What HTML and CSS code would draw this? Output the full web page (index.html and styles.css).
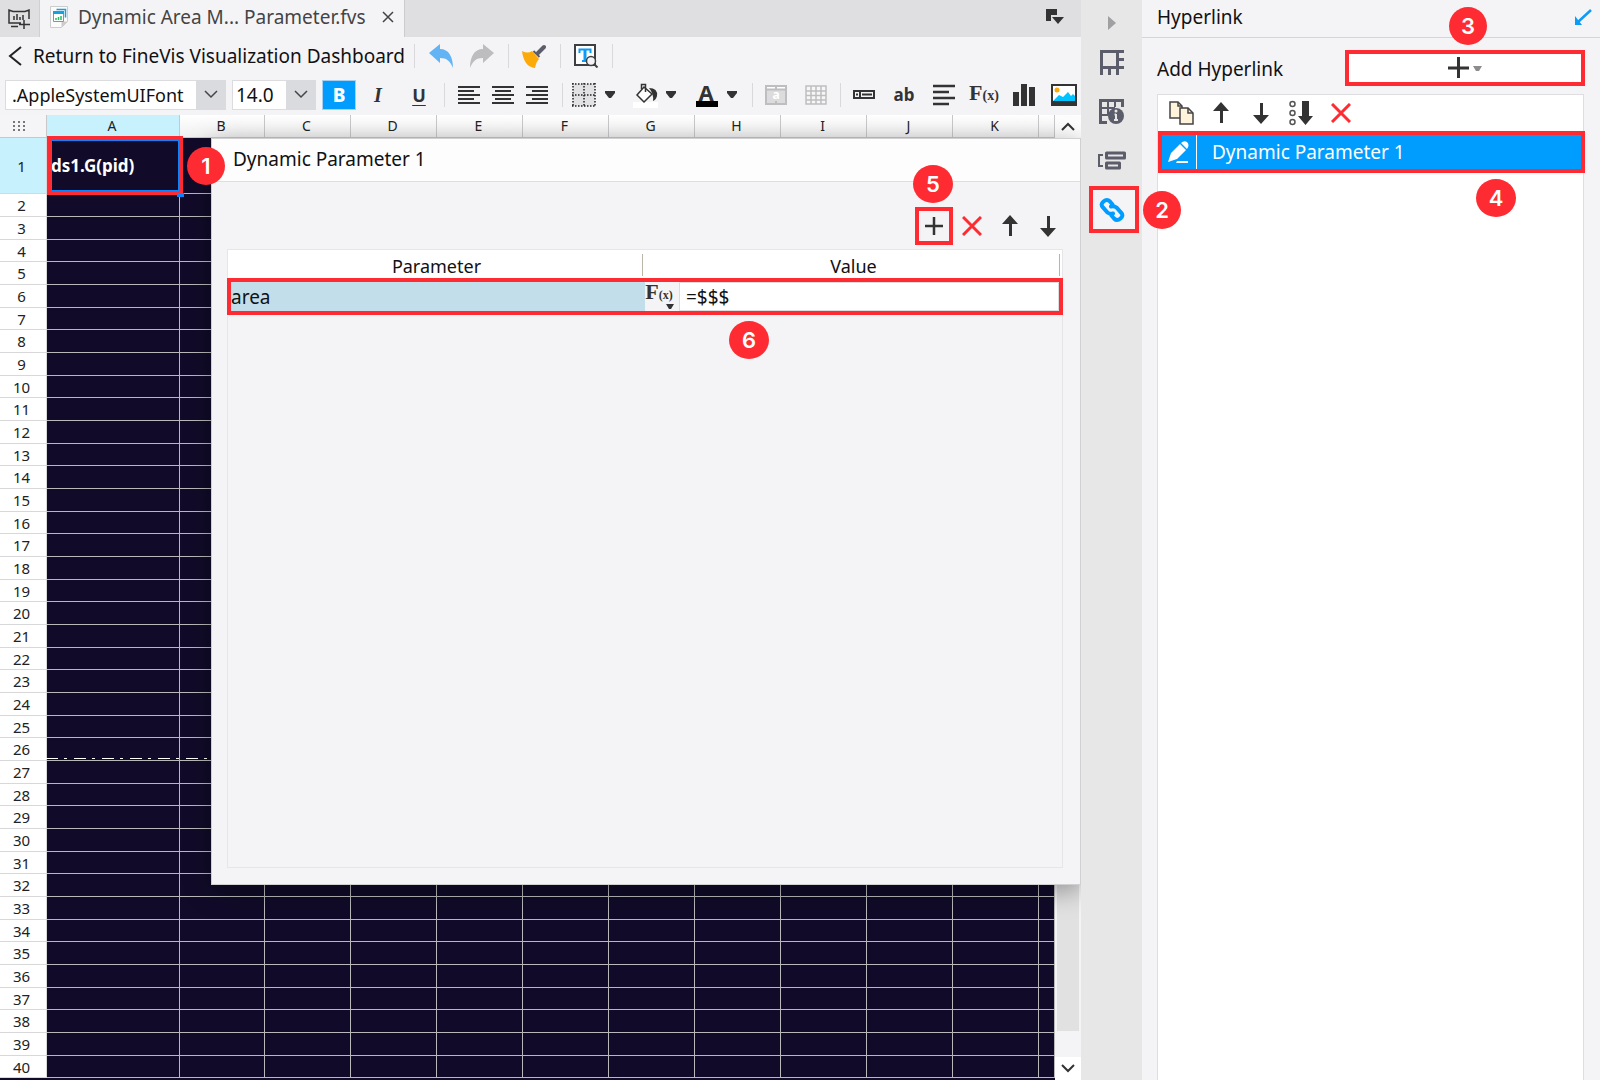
FILE: index.html
```html
<!DOCTYPE html>
<html lang="en">
<head>
<meta charset="utf-8">
<title>Dynamic Area Map Parameter.fvs</title>
<link rel="stylesheet" href="styles.css">
</head>
<body>
<div class="app">
  <main class="editor">
    <div class="tabs">
      <button class="tab-new" aria-label="New dashboard">
        <svg width="24" height="22" viewBox="0 0 24 22" fill="none" stroke="#333" stroke-width="1.500"><path d="M14 15H2V2l4 1.500h12L22 2v9M7 8v4M10 6v6M13 9v3M16 7v5M4 18.500h7M17 12v9M12 16.500h11"/></svg>
      </button>
      <div class="tab">
        <svg width="18" height="22" viewBox="0 0 18 22"><path d="M.5.5h17v15l-6 6H.5z" fill="#fbfbfb" stroke="#ccc"/><path d="M11.500 21.500v-6h6z" fill="#ccc"/><path d="M6.500 3.500h9v8" fill="none" stroke="#16a0e0" stroke-width="1.500"/><path d="M3.500 5.500h10v10h-10z" fill="#fff" stroke="#35aee8"/><path d="M3 5h11v3H3z" fill="#16a0e0"/><path d="M6 14v-2M8.500 14v-3M11 14v-4" stroke="#20c060" stroke-width="1.500"/></svg>
        <span>Dynamic Area M... Parameter.fvs</span>
        <button class="tab-close" aria-label="Close tab"><svg width="12" height="12" viewBox="0 0 12 12" stroke="#444" stroke-width="1.500"><path d="M1 1l10 10M11 1L1 11"/></svg></button>
      </div>
      <button class="tab-list" aria-label="Tab list"><svg width="18" height="16" viewBox="0 0 18 16" fill="#333"><path d="M0 0h11v6H5v6H0zM6 8h12l-6 7z"/></svg></button>
    </div>

    <div class="toolbar">
      <button class="return"><svg width="14" height="20" viewBox="0 0 14 20" fill="none" stroke="#222" stroke-width="2"><path d="M13 1L2 10l11 9"/></svg>Return to FineVis Visualization Dashboard</button>
      <i class="sep"></i>
      <div class="history">
        <button aria-label="Undo"><svg width="26" height="24" viewBox="0 0 26 24" fill="#63b4f4"><path d="M1 9L12 0v5c9 0 13 8 13 19-3-7-6-10-13-10v5z"/></svg></button>
        <button aria-label="Redo"><svg width="26" height="24" viewBox="0 0 26 24" fill="#bdbdbf"><path d="M25 9L14 0v5C5 5 1 13 1 24c3-7 6-10 13-10v5z"/></svg></button>
      </div>
      <i class="sep"></i>
      <button class="w44" aria-label="Format painter"><svg width="24" height="24" viewBox="0 0 24 24"><path d="M0 7q6 3 10 0l7 8q-3 3-4 9Q2 23 0 7z" fill="#fca90a"/><path d="M16 9l6-6" stroke="#5b5d6b" stroke-width="4" stroke-linecap="round"/><path d="M11.500 7l6 6" stroke="#5b5d6b" stroke-width="2"/></svg></button>
      <i class="sep"></i>
      <button class="w44" aria-label="Find text"><svg width="26" height="24" viewBox="0 0 26 24"><path d="M2 1h20v20H2z" fill="#fff" stroke="#3c4043" stroke-width="2"/><path d="M6.500 9V5.500h11V9" fill="none" stroke="#0a9cf8" stroke-width="2"/><path d="M12 5v12" stroke="#0a9cf8" stroke-width="3"/><path d="M9 17h5" stroke="#0a9cf8" stroke-width="2"/><circle cx="18" cy="17" r="4.500" fill="#f4f4f7" stroke="#3c4043" stroke-width="1.500"/><path d="M21.500 20.500l3 3" stroke="#3c4043" stroke-width="2"/></svg></button>
      <i class="sep"></i>
    </div>

    <div class="toolbar format">
      <label class="combo family"><select aria-label="Font"><option>.AppleSystemUIFont</option></select><span><svg width="14" height="9" viewBox="0 0 14 9" fill="none" stroke="#444" stroke-width="1.500"><path d="M1 1l6 6 6-6"/></svg></span></label>
      <label class="combo size"><select aria-label="Font size"><option>14.0</option></select><span><svg width="14" height="9" viewBox="0 0 14 9" fill="none" stroke="#444" stroke-width="1.500"><path d="M1 1l6 6 6-6"/></svg></span></label>
      <button class="bold">B</button>
      <button class="w42 italic">I</button>
      <button class="w42 underline">U</button>
      <i class="sep"></i>
      <div class="group">
        <button class="w34" aria-label="Align left"><svg width="22" height="18" viewBox="0 0 22 18" stroke="#333" stroke-width="2"><path d="M0 1h22M0 5h16M0 9h22M0 13h16M0 17h22"/></svg></button>
        <button class="w34" aria-label="Align center"><svg width="22" height="18" viewBox="0 0 22 18" stroke="#333" stroke-width="2"><path d="M0 1h22M3 5h16M0 9h22M3 13h16M0 17h22"/></svg></button>
        <button class="w34" aria-label="Align right"><svg width="22" height="18" viewBox="0 0 22 18" stroke="#333" stroke-width="2"><path d="M0 1h22M6 5h16M0 9h22M6 13h16M0 17h22"/></svg></button>
      </div>
      <i class="sep"></i>
      <div class="group split">
        <div>
          <button class="w28" aria-label="Borders"><svg width="24" height="24" viewBox="0 0 24 24"><path d="M1 1h22v22H1z" fill="#e2e2e4"/><path d="M0 1h24M0 12h24M0 23h24M1 0v24M12 0v24M23 0v24" stroke="#222" stroke-width="1.500" stroke-dasharray="1.500 1.500"/></svg></button>
          <button class="w24" aria-label="Border options"><svg width="10" height="7" viewBox="0 0 10 7" fill="#333"><path d="M0 0h10v2L6 7H4L0 2z"/></svg></button>
        </div>
        <div>
          <button class="w28" aria-label="Fill color"><svg width="26" height="26" viewBox="0 0 26 26"><path d="M1 20h25v6H1z" fill="#fff"/><path d="M12 5l8 7-8 8-7-7z" fill="#fff" stroke="#333" stroke-width="1.500"/><path d="M9.500 7V2.500h4V10" fill="none" stroke="#333" stroke-width="1.500"/><path d="M17 6q9 0 8 8-1 4-4 5 1-7-4-13z" fill="#333"/></svg></button>
          <button class="w24" aria-label="Fill options"><svg width="10" height="7" viewBox="0 0 10 7" fill="#333"><path d="M0 0h10v2L6 7H4L0 2z"/></svg></button>
        </div>
        <div>
          <button class="w28 ink">A</button>
          <button class="w24" aria-label="Text color options"><svg width="10" height="7" viewBox="0 0 10 7" fill="#333"><path d="M0 0h10v2L6 7H4L0 2z"/></svg></button>
        </div>
      </div>
      <i class="sep"></i>
      <button class="w40 merge" aria-label="Merge cells"><svg width="22" height="20" viewBox="0 0 22 20" fill="none" stroke="#bebec0" stroke-width="2"><path d="M1 1h20v18H1z" fill="#dcdcde"/><path d="M2 2h18v2H2z" fill="#fff" stroke="none"/><path d="M1 4.500h20M11 1v3M11 16v3"/></svg><span>a</span></button>
      <button class="w40" aria-label="Split cells"><svg width="22" height="20" viewBox="0 0 22 20" fill="none" stroke="#bebec0" stroke-width="1.500"><path d="M1 1h20v18H1z" fill="#f7f7f8"/><path d="M1 6h20M1 10.500h20M1 15h20M6 1v18M11 1v18M16 1v18"/></svg></button>
      <i class="sep"></i>
      <button class="w40" aria-label="Widget"><svg width="22" height="9" viewBox="0 0 22 9" fill="none" stroke="#333" stroke-width="2"><path d="M1 1h20v7H1zM7 1v7M9 4.500h10M3 4.500h2"/></svg></button>
      <button class="w40 ab">ab</button>
      <button class="w40" aria-label="Rich text"><svg width="22" height="22" viewBox="0 0 22 22" stroke="#333" stroke-width="2.500"><path d="M0 2h22M0 8h16M0 14h22M0 20h16"/></svg></button>
      <button class="w40 fx" aria-label="Formula">F<small>(x)</small></button>
      <button class="w40" aria-label="Chart"><svg width="22" height="22" viewBox="0 0 22 22" fill="#333"><path d="M0 8h6v14H0zM8 0h6v22H8zM16 3h6v19h-6z"/></svg></button>
      <button class="w40" aria-label="Image"><svg width="26" height="22" viewBox="0 0 26 22"><path d="M1 1h24v20H1z" fill="#fff" stroke="#333" stroke-width="2"/><path d="M2 17l6-6 4 2 5-5 3 4 2-2 2 2v5z" fill="#00c3ff"/><path d="M1 17h24v4H1z" fill="#333"/><circle cx="6" cy="6" r="2.500" fill="#fca90a"/></svg></button>
    </div>

    <div class="workspace">
      <div class="sheet">
        <table>
          <colgroup><col class="c-num"><col class="c-a"><col class="c-b"><col class="c"><col class="c"><col class="c"><col class="c"><col class="c"><col class="c"><col class="c"><col class="c"><col class="c"><col></colgroup>
          <thead><tr><th aria-label="Select all"><svg width="13" height="10" viewBox="0 0 13 10" stroke="#777" stroke-width="2" stroke-dasharray="2 2"><path d="M1 0v10M6 0v10M11 0v10"/></svg></th><th class="on">A</th><th>B</th><th>C</th><th>D</th><th>E</th><th>F</th><th>G</th><th>H</th><th>I</th><th>J</th><th>K</th><th></th></tr></thead>
          <tbody id="rows"></tbody>
        </table>
        <div class="mark mark-cell"></div>
      </div>
      <div class="scroll">
        <button aria-label="Scroll up"><svg width="14" height="9" viewBox="0 0 14 9" fill="none" stroke="#333" stroke-width="2"><path d="M1 8l6-6 6 6"/></svg></button>
        <div class="track"></div>
        <button class="down" aria-label="Scroll down"><svg width="14" height="9" viewBox="0 0 14 9" fill="none" stroke="#333" stroke-width="2"><path d="M1 1l6 6 6-6"/></svg></button>
      </div>

      <section class="dialog" aria-label="Dynamic Parameter 1">
        <h2>Dynamic Parameter 1</h2>
        <div class="actions">
          <button class="marked" aria-label="Add"><svg width="18" height="18" viewBox="0 0 18 18" stroke="#333" stroke-width="2.500"><path d="M0 9h18M9 0v18"/></svg></button>
          <button aria-label="Delete"><svg width="20" height="20" viewBox="0 0 20 20" stroke="#fe2b32" stroke-width="3"><path d="M1 1l18 18M19 1L1 19"/></svg></button>
          <button aria-label="Move up"><svg width="16" height="22" viewBox="0 0 16 22" fill="#333"><path d="M8 0l8 9H10v12H7V9H0z"/></svg></button>
          <button aria-label="Move down"><svg width="16" height="22" viewBox="0 0 16 22" fill="#333"><path d="M8 22l8-9H10V1H7v12H0z"/></svg></button>
        </div>
        <div class="params">
          <table>
            <thead><tr><th>Parameter</th><th>Value</th></tr></thead>
            <tbody><tr>
              <td class="name">area</td>
              <td><div class="value"><button class="fx" aria-label="Value type">F<small>(x)</small><svg width="8" height="6" viewBox="0 0 8 6" fill="#333"><path d="M0 0h8L5 5H3z"/></svg></button><input aria-label="Value" value="=$$$"></div></td>
            </tr></tbody>
          </table>
          <div class="mark mark-row"></div>
          <b class="badge wide b6">6</b>
        </div>
        <b class="badge wide b5">5</b>
      </section>
      <b class="badge b1">1</b>
    </div>
  </main>

  <nav class="strip" aria-label="Property panels">
    <button class="collapse" aria-label="Collapse"><svg width="8" height="14" viewBox="0 0 8 14" fill="#a0a0a2"><path d="M0 0l8 7-8 7z"/></svg></button>
    <button aria-label="Cell element"><svg width="24" height="25" viewBox="0 0 24 25" fill="none" stroke="#5b5d6b" stroke-width="3"><path d="M24 1.500H1.500V25M1.500 17.500H24M17.500 1.500V25M17.500 9.500H24M9.500 17.500V25"/></svg></button>
    <button aria-label="Cell attributes"><svg width="25" height="25" viewBox="0 0 25 25" fill="none" stroke="#5b5d6b"><path d="M23.500 8V1.500H1.500v22H8" stroke-width="3"/><path d="M9 2v14M2 9h14M2 16h7M16 2v6" stroke-width="2"/><circle cx="17" cy="17" r="8" fill="#5b5d6b" stroke="none"/><path d="M17 15v6M15 21h4M15.500 15.500H17" stroke="#e7e7e7" stroke-width="2"/><circle cx="17" cy="12" r="1.500" fill="#e7e7e7" stroke="none"/></svg></button>
    <button aria-label="Conditional attributes"><svg width="28" height="20" viewBox="0 0 28 20" fill="none" stroke="#5b5d6b"><path d="M5 4H1v11h4" stroke-width="2"/><path d="M8.500 2h18v5h-18zM8.500 12h13v5h-13z" stroke-width="3" stroke-linejoin="round"/></svg></button>
    <button class="on" aria-label="Hyperlink"><svg width="26" height="26" viewBox="0 0 26 26" fill="none" stroke="#009dff" stroke-width="4" stroke-linecap="round"><path d="M13.500 7.500L11 4.500Q8 1.500 4.500 4.500T4 10.500l4.500 5Q11 17.500 14 16.500"/><path d="M12.500 18.500l2.500 3Q18 24.500 21.500 21.500T22 15.500l-4.500-5Q15 8.500 12 9.500"/></svg></button>
    <b class="badge b2">2</b>
  </nav>

  <aside class="panel">
    <header><h1>Hyperlink</h1><button aria-label="Pop in"><svg width="18" height="17" viewBox="0 0 18 17" fill="none" stroke="#0a9cf8" stroke-width="2.500"><path d="M17 1L4 13"/><path d="M1 7l7 9H1z" fill="#0a9cf8" stroke="none"/></svg></button></header>
    <div class="add"><span id="add-label">Add Hyperlink</span><button aria-labelledby="add-label"><svg width="34" height="22" viewBox="0 0 34 22"><path d="M0 11h21M10.500 0v21" stroke="#333" stroke-width="3"/><path d="M25 9h9l-3 5h-3z" fill="#8c8c8e"/></svg></button></div>
    <div class="list">
      <div class="list-tools">
        <button aria-label="Copy"><svg width="25" height="24" viewBox="0 0 25 24" fill="#fff3dc" stroke="#444" stroke-width="1.500"><path d="M1 1h8l4 4v12H1z"/><path d="M9 1v4h4" fill="none"/><path d="M11 7h8l5 5v11H11z"/><path d="M19 7v5h5" fill="none"/></svg></button>
        <button aria-label="Move up"><svg width="16" height="22" viewBox="0 0 16 22" fill="#333"><path d="M8 0l8 9H10v12H7V9H0z"/></svg></button>
        <button aria-label="Move down"><svg width="16" height="22" viewBox="0 0 16 22" fill="#333"><path d="M8 22l8-9H10V1H7v12H0z"/></svg></button>
        <button aria-label="Sort"><svg width="24" height="26" viewBox="0 0 24 26" fill="#333"><g fill="none" stroke="#555" stroke-width="1.500"><circle cx="3.500" cy="4" r="2.500"/><circle cx="3.500" cy="13" r="2.500"/><circle cx="3.500" cy="22" r="2.500"/></g><path d="M13 1h7v15h4l-7.500 9L9 16h4z"/></svg></button>
        <button aria-label="Delete"><svg width="20" height="20" viewBox="0 0 20 20" stroke="#fe2b32" stroke-width="3"><path d="M1 1l18 18M19 1L1 19"/></svg></button>
      </div>
      <div class="item">
        <button class="edit" aria-label="Edit"><svg width="22" height="23" viewBox="0 0 22 23" fill="#fff"><path d="M0 21l3-9L12 3l6 6-9 9zM13 2q3-3 6-1 3 3 0 7z"/><path d="M9 20h11v2H8z"/></svg></button>
        <span>Dynamic Parameter 1</span>
        <b class="badge wide b4">4</b>
      </div>
    </div>
    <b class="badge b3">3</b>
  </aside>
</div>
<script src="grid.js"></script>
</body>
</html>
```

FILE: grid.js
```js
const body = document.getElementById('rows');
for (let n = 1; n <= 40; n++) {
  const row = body.insertRow();
  const head = document.createElement('th');
  head.textContent = n;
  row.append(head);
  for (let c = 0; c < 12; c++) row.insertCell();
  if (n === 1) {
    row.className = 'first';
    row.cells[1].textContent = 'ds1.G(pid)';
  }
  if (n === 26) row.className = 'page-end';
}
```

FILE: styles.css
```css
* { box-sizing: border-box; }
body { margin: 0; font: 19px/24px "Noto Sans", "Open Sans", sans-serif; color: #111; }
button, input, select { font: inherit; color: inherit; margin: 0; padding: 0; border: 0; background: none; }
button { display: flex; align-items: center; justify-content: center; flex: none; }
h1, h2 { margin: 0; font-size: 19px; font-weight: 400; }
svg { display: block; flex: none; }

.app { display: flex; height: 100vh; overflow: hidden; background: #f4f4f7; }
.editor { flex: 1; min-width: 0; display: flex; flex-direction: column; }

.tabs { display: flex; height: 37px; background: #dfdfe1; flex: none; }
.tab-new { width: 40px; border-right: 1px solid #d0d0d2; padding-right: 2px; }
.tab { display: flex; align-items: center; gap: 10px; width: 365px; padding: 0 10px 4px; background: #f4f4f7; border-right: 1px solid #ccccce; color: #444; white-space: nowrap; line-height: 30px; }
.tab-close { margin-left: auto; height: 30px; }
.tab-list { margin-left: auto; width: 52px; padding-bottom: 4px; }

.toolbar { display: flex; align-items: center; height: 39px; padding-bottom: 2px; flex: none; }
.toolbar.format { padding-left: 5px; }
.return { width: 410px; justify-content: flex-start; gap: 11px; padding-left: 8px; white-space: nowrap; }
.sep { width: 8px; height: 24px; flex: none; background: linear-gradient(#d9d9db, #d9d9db) center / 1px 100% no-repeat; }
.history { display: flex; padding: 0 2px; }
.history button { width: 41px; }
.w24 { width: 24px; } .w28 { width: 28px; } .w34 { width: 34px; }
.w40 { width: 40px; } .w42 { width: 42px; } .w44 { width: 44px; }
.group { display: flex; padding: 0 4px; }
.split { gap: 9px; }
.split div { display: flex; align-items: center; }
.combo { position: relative; height: 30px; margin-right: 6px; flex: none; }
.combo select { appearance: none; width: 100%; height: 30px; padding: 0 0 0 6px; background: #fff; border: 1px solid #dcdcde; }
.combo span { position: absolute; right: 0; top: 0; width: 30px; height: 30px; display: grid; place-items: center; background: #dadbdf; pointer-events: none; }
.family { width: 221px; }
.family select { font-size: 18px; }
.size { width: 84px; }
.size select { padding-left: 3px; }
.bold { width: 34px; height: 30px; background: #009dff; border: 1px solid #a9cfee; color: #fff; font-weight: 800; }
.italic { padding-left: 2px; font: italic 700 20px/24px "Liberation Serif", serif; color: #333; }
.underline { font-weight: 700; text-decoration: underline; text-underline-offset: 3px; color: #333; font-size: 18px; }
.ink { height: 25px; border: solid #000; border-width: 0 2px 6px; border-image: linear-gradient(90deg, transparent 2px, #000 2px) 0 0 6; font-weight: 700; font-size: 22px; line-height: 18px; color: #333; }
.merge { position: relative; }
.merge span { position: absolute; color: #fff; font: 700 12px/12px "Noto Sans", sans-serif; }
.ab { font-size: 17px; font-weight: 700; color: #333; }
.fx { font: 700 22px/24px "Liberation Serif", serif; color: #333; align-items: baseline; }
.fx small { font-size: 14px; }

.workspace { position: relative; display: flex; flex: 1; min-height: 0; }
.sheet { position: relative; flex: 1; min-width: 0; overflow: hidden; background: #110b29; }
.sheet table { width: 100%; table-layout: fixed; border-collapse: separate; border-spacing: 0; font-size: 15px; line-height: 18px; }
.sheet th, .sheet td { padding: 0; border: solid #b9b9bb; border-width: 0 1px 1px 0; height: 23px; }
.sheet th { font-weight: 400; color: #222; }
.c-num { width: 47px; } .c-a { width: 133px; } .c-b { width: 85px; } .c { width: 86px; }
.sheet thead th { padding-right: 2px; font-size: 14px; background: linear-gradient(#fff, #f0f0f1); border-color: #c8c8ca; }
.sheet thead th:first-child { background: #f5f5f7; padding-right: 7px; }
.sheet thead th svg { margin: 0 auto; }
.sheet thead th.on, .sheet tbody .first th { background: #c6f1fd; }
.sheet tbody th { background: #fff; border-color: #77778a #d8d8da #d8d8da; padding-right: 3px; }
.sheet tbody tr:nth-child(3n+4) > * { height: 22px; }
.sheet tbody .first > * { height: 56px; }
.sheet .first td { font-size: 17px; font-weight: 700; color: #fff; padding-left: 4px; }
.page-end th { position: relative; }
.page-end th::after { content: ""; position: absolute; left: 100%; bottom: 1px; width: 100vw; height: 1px; background: repeating-linear-gradient(90deg, #fff 0 12px, transparent 12px 18px, #fff 18px 21px, transparent 21px 28px); }
.mark { position: absolute; border: 4px solid #fe2b32; pointer-events: none; }
.mark-cell { left: 47px; top: 21px; width: 136px; height: 59px; box-shadow: inset 0 0 0 1px #0a84ff; }
.mark-cell::after { content: ""; position: absolute; right: -5px; bottom: -6px; width: 7px; height: 4px; background: #0a84ff; }

.scroll { display: flex; flex-direction: column; width: 26px; flex: none; }
.scroll button { height: 23px; background: #fdfdfd; }
.track { flex: 1; margin: 0 2px 26px; background: #e1e1e1; }
.scroll .down { background: #fff; }

.dialog { position: absolute; left: 211px; right: 0; top: 23px; height: 747px; display: flex; flex-direction: column; background: #f4f4f7; border: 1px solid #d0d0d2; box-shadow: 0 6px 24px rgba(0, 0, 0, .35); }
.dialog h2 { height: 43px; padding: 8px 21px; background: #fdfdfd; border-bottom: 1px solid #dedee0; flex: none; }
.actions { display: flex; justify-content: flex-end; padding: 25px 13px 4px; }
.actions button { width: 38px; height: 38px; }
.actions .marked { border: 4px solid #fe2b32; }
.params { position: relative; flex: 1; margin: 0 17px 16px 15px; border: 1px solid #e6e6e9; }
.params table { width: 100%; table-layout: fixed; border-collapse: collapse; }
.params th { height: 28px; padding: 4px 0 0; line-height: 22px; font-size: 18px; font-weight: 400; background: linear-gradient(#b9b5a8, #b9b5a8) calc(100% - 2px) 4px / 1px 22px no-repeat #fff; }
.params td { height: 37px; padding: 4px 0; }
.params .name { padding-left: 3px; background: #c2deea; }
.value { display: flex; height: 29px; padding-right: 3px; }
.value .fx { position: relative; width: 34px; padding-right: 6px; line-height: 20px; font-size: 22px; }
.value .fx small { font-size: 12px; }
.value .fx svg { position: absolute; right: 5px; bottom: 1px; }
.value input { flex: 1; min-width: 0; padding-left: 6px; background: #fff; border: 1px solid #dcdcde; }
.mark-row { left: -1px; right: -1px; top: 28px; height: 37px; }

.strip { position: relative; width: 61px; flex: none; display: flex; flex-direction: column; padding-top: 14px; background: #e7e7e7; }
.strip button { height: 49px; }
.strip .collapse { height: 18px; margin-bottom: 6px; }
.strip .on { margin: 1px 3px 1px 8px; height: 47px; padding-right: 5px; border: 4px solid #fe2b32; background: #f4f4f7; }

.panel { position: relative; width: 458px; flex: none; display: flex; flex-direction: column; }
.panel header { display: flex; align-items: center; justify-content: space-between; height: 38px; padding: 0 8px 3px 15px; border-bottom: 1px solid #d6d6d8; }
.add { display: flex; align-items: center; justify-content: space-between; padding: 12px 15px 8px; }
.add span { padding-top: 2px; }
.add button { width: 240px; height: 36px; border: 4px solid #fe2b32; background: #fff; }
.list { flex: 1; margin: 0 16px 0 15px; background: #fff; border: solid #dedee0; border-width: 1px 1px 0; }
.list-tools { display: flex; padding-left: 3px; }
.list-tools button { width: 40px; height: 36px; }
.item { position: relative; display: flex; align-items: center; height: 42px; margin-right: -2px; border: 4px solid #fe2b32; background: #009dff; color: #fff; }
.edit { width: 35px; height: 34px; border-right: 1px solid #fff; margin-right: 15px; }

.badge { position: absolute; z-index: 1; width: 38px; height: 38px; border-radius: 50%; background: #fe2b32; color: #fff; font: 600 22px/38px Inter, "Liberation Sans", sans-serif; text-align: center; }
.wide { width: 40px; }
.b1 { left: 187px; top: 32px; }
.b2 { left: 62px; top: 191px; }
.b3 { right: 113px; top: 7px; }
.b4 { right: 65px; top: 44px; }
.b5 { right: 127px; top: 26px; }
.b6 { left: 501px; top: 71px; }
```
